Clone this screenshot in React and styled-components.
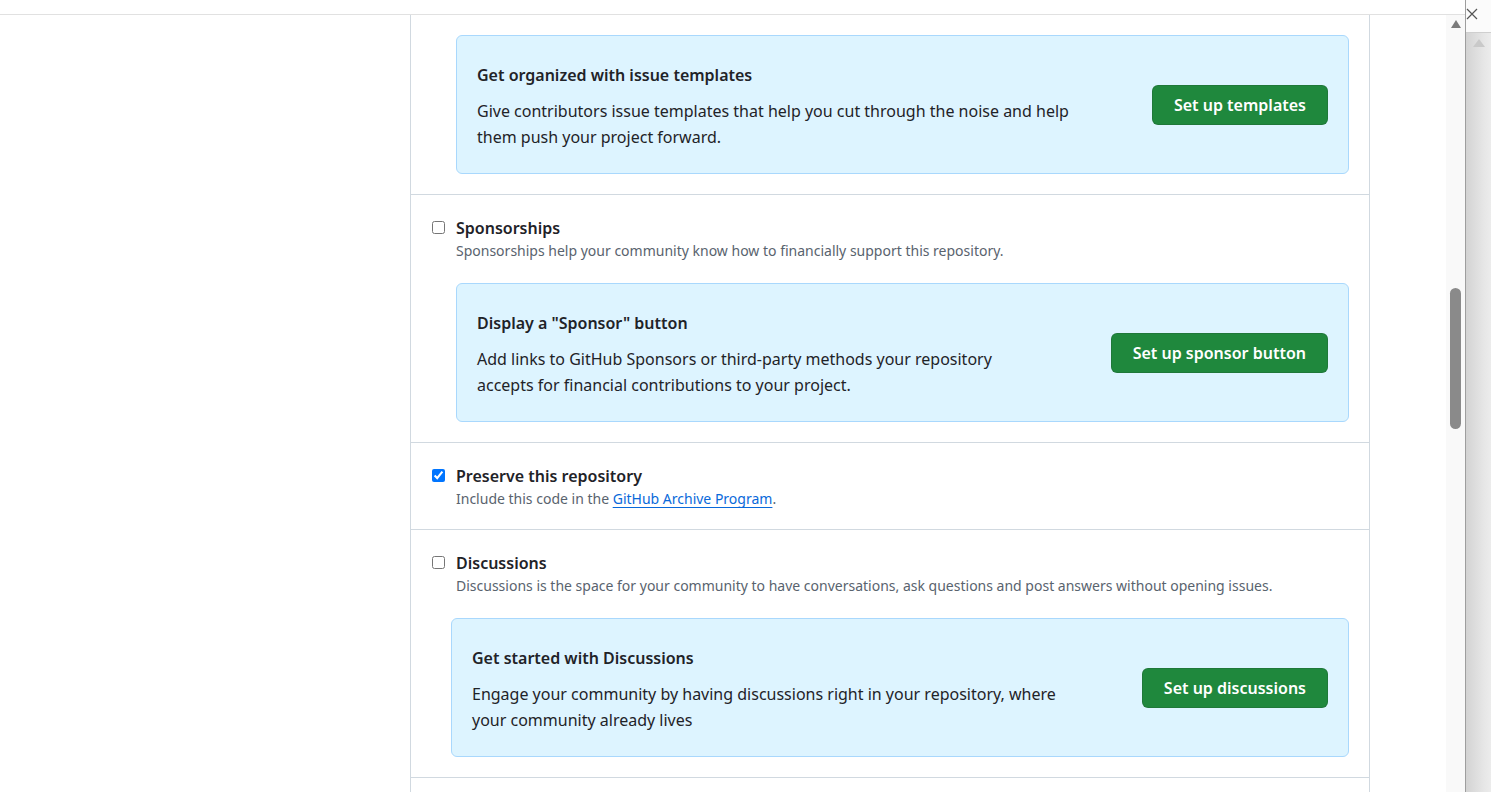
import React from "react";
import styled, { createGlobalStyle } from "styled-components";

const GlobalStyle = createGlobalStyle`
  html, body { margin: 0; padding: 0; background: #ffffff; }
  body {
    font-family: "Noto Sans", "Open Sans", "Liberation Sans", sans-serif;
    color: #1f2328;
    -webkit-font-smoothing: antialiased;
  }
  * { box-sizing: border-box; }
`;

const Frame = styled.div`
  display: flex;
  height: 792px;
  overflow: hidden;
`;

const Viewport = styled.div`
  flex: 1;
  display: flex;
  flex-direction: column;
  min-width: 0;
`;

const TopBar = styled.div`
  height: 15px;
  flex: none;
  border-bottom: 1px solid #e1e1e1;
`;

const Body = styled.div`
  flex: 1;
  display: flex;
  min-height: 0;
`;

const Gutter = styled.div`
  width: ${(p) => p.$w}px;
  flex: ${(p) => (p.$w ? "none" : "1")};
`;

const Panel = styled.div`
  width: 960px;
  flex: none;
  border-left: 1px solid #d1d9e0;
  border-right: 1px solid #d1d9e0;
  display: flex;
  flex-direction: column;
`;

const Section = styled.div`
  border-bottom: 1px solid #d1d9e0;
  padding: ${(p) => (p.$first ? "20px" : "21px")} 20px 20px 21px;
`;

const Header = styled.label`
  display: flex;
  align-items: flex-start;
  gap: 11px;
  cursor: pointer;
`;

const Check = styled.input.attrs({ type: "checkbox" })`
  width: 13px;
  height: 13px;
  margin: 5px 0 0 0;
  flex: none;
`;

const Title = styled.span`
  font-size: 16px;
  line-height: 24px;
  font-weight: 600;
  color: #1f2328;
`;

const Indent = styled.div`
  margin-left: 24px;
`;

const Note = styled.p`
  margin: 0;
  padding-top: 1px;
  font-size: 14px;
  line-height: 20px;
  color: #59636e;
`;

const Link = styled.a`
  color: #0969da;
  text-decoration: underline;
  text-underline-offset: 3px;
  text-decoration-thickness: 1px;
`;

const Banner = styled.div`
  display: flex;
  align-items: center;
  gap: 64px;
  margin: ${(p) => (p.$top ? "22px" : "0")} 0 0 ${(p) => p.$shift || 0}px;
  padding: 27px 20px 23px 20px;
  background: #ddf4ff;
  border: 1px solid #a9d8fd;
  border-radius: 6px;
`;

const BannerText = styled.div`
  flex: 1;
  min-width: 0;
`;

const BannerTitle = styled.h3`
  margin: 0 0 11px 0;
  font-size: 16px;
  line-height: 24px;
  font-weight: 600;
  color: #1f2328;
`;

const BannerDesc = styled.p`
  margin: 0;
  font-size: 16px;
  line-height: 26px;
  color: #1f2328;
`;

const Button = styled.button`
  flex: none;
  height: 40px;
  margin-top: -4px;
  padding: 0 21px;
  border-radius: 6px;
  border: 1px solid rgba(31, 35, 40, 0.15);
  background: #1f883d;
  color: #ffffff;
  font-family: inherit;
  font-size: 16px;
  font-weight: 600;
  cursor: pointer;
`;

const InnerScroll = styled.div`
  width: 19px;
  flex: none;
  background: #f9f9f9;
  display: flex;
  flex-direction: column;
  align-items: center;
  padding-top: 5px;
`;

const Thumb = styled.div`
  width: 11px;
  height: 141px;
  margin-top: ${(p) => p.$offset}px;
  border-radius: 6px;
  background: #8a8a8a;
`;

const OuterScroll = styled.div`
  width: 26px;
  flex: none;
  border-left: 1px solid #9e9e9e;
  display: flex;
  flex-direction: column;
`;

const OuterTop = styled.div`
  height: 33px;
  flex: none;
  background: #fbfbfb;
  border-bottom: 1px solid #cfcfcf;
  padding: 8px 0 0 0;
`;

const OuterTrack = styled.div`
  flex: 1;
  background: linear-gradient(to right, #d3d3d3 0%, #e6e6e6 70%, #ececec 100%);
  display: flex;
  justify-content: center;
  padding-top: 6px;
`;

const Triangle = ({ color, w, h }) => (
  <svg width={w} height={h} viewBox={`0 0 ${w} ${h}`}>
    <polygon points={`${w / 2},0 ${w},${h} 0,${h}`} fill={color} />
  </svg>
);

const CloseX = () => (
  <svg width="12" height="12" viewBox="0 0 12 12" style={{ display: "block" }}>
    <path d="M1 1 L11 11 M11 1 L1 11" stroke="#555" strokeWidth="1.2" fill="none" />
  </svg>
);

const banners = {
  templates: {
    title: "Get organized with issue templates",
    desc: "Give contributors issue templates that help you cut through the noise and help them push your project forward.",
    button: "Set up templates",
  },
  sponsor: {
    title: 'Display a "Sponsor" button',
    desc: "Add links to GitHub Sponsors or third-party methods your repository accepts for financial contributions to your project.",
    button: "Set up sponsor button",
  },
  discussions: {
    title: "Get started with Discussions",
    desc: "Engage your community by having discussions right in your repository, where your community already lives",
    button: "Set up discussions",
  },
};

const CTA = ({ data, top, shift }) => (
  <Banner $top={top} $shift={shift}>
    <BannerText>
      <BannerTitle>{data.title}</BannerTitle>
      <BannerDesc>{data.desc}</BannerDesc>
    </BannerText>
    <Button type="button">{data.button}</Button>
  </Banner>
);

export default function App() {
  return (
    <>
      <GlobalStyle />
      <Frame>
        <Viewport>
          <TopBar />
          <Body>
            <Gutter $w={410} />
            <Panel>
              <Section $first>
                <Indent>
                  <CTA data={banners.templates} />
                </Indent>
              </Section>
              <Section>
                <Header>
                  <Check />
                  <Title>Sponsorships</Title>
                </Header>
                <Indent>
                  <Note>Sponsorships help your community know how to financially support this repository.</Note>
                  <CTA data={banners.sponsor} top />
                </Indent>
              </Section>
              <Section>
                <Header>
                  <Check defaultChecked />
                  <Title>Preserve this repository</Title>
                </Header>
                <Indent>
                  <Note>
                    Include this code in the <Link href="#">GitHub Archive Program</Link>.
                  </Note>
                </Indent>
              </Section>
              <Section>
                <Header>
                  <Check />
                  <Title>Discussions</Title>
                </Header>
                <Indent>
                  <Note>
                    Discussions is the space for your community to have conversations, ask questions and post answers without opening issues.
                  </Note>
                  <CTA data={banners.discussions} top shift={-5} />
                </Indent>
              </Section>
            </Panel>
            <Gutter />
            <InnerScroll>
              <Triangle color="#7b7b7b" w={10} h={8} />
              <Thumb $offset={260} />
            </InnerScroll>
          </Body>
        </Viewport>
        <OuterScroll>
          <OuterTop>
            <CloseX />
          </OuterTop>
          <OuterTrack>
            <Triangle color="#c9c9c9" w={12} h={8} />
          </OuterTrack>
        </OuterScroll>
      </Frame>
    </>
  );
}
